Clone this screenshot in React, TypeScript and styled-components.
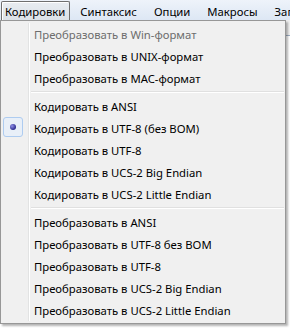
import React from 'react';
import { styled, createGlobalStyle } from 'styled-components';

const Global = createGlobalStyle`
  html, body {
    margin: 0;
    padding: 0;
    background: #ffffff;
  }
  body {
    font-family: 'Noto Sans', 'Open Sans', 'DejaVu Sans', sans-serif;
    font-size: 11.3px;
  }
`;

const Window = styled.div`
  width: 290px;
  height: 328px;
  display: flex;
  flex-direction: column;
  overflow: hidden;
  position: relative;
`;

const MenuBar = styled.div`
  height: 20px;
  display: flex;
  align-items: stretch;
  gap: 1px;
  background: linear-gradient(#eef3fa, #dde7f4);
  white-space: nowrap;
  overflow: hidden;
`;

const BarItem = styled.div<{ $open?: boolean }>`
  flex: none;
  display: flex;
  align-items: center;
  padding: ${({ $open }) => ($open ? '0 4px 0 3px' : '0 7px')};
  margin: 1px ${({ $open }) => ($open ? '1px' : '0')} 0
    ${({ $open }) => ($open ? '1px' : '0')};
  color: #000;
  border: 1px solid ${({ $open }) => ($open ? '#6e6e6e' : 'transparent')};
  border-bottom: none;
  border-radius: 2px 2px 0 0;
  background: ${({ $open }) =>
    $open ? 'linear-gradient(#e8ecf1, #dbe1e8)' : 'transparent'};
  box-shadow: ${({ $open }) => ($open ? 'inset 1px 1px 0 #fff' : 'none')};
`;

const Body = styled.div`
  flex: 1;
  position: relative;
  background: #ffffff;
`;

const Toolbar = styled.div`
  height: 15px;
  background: #f0f0f0;
  border-bottom: 1px solid #a0afc3;
`;

const Dropdown = styled.div`
  position: absolute;
  top: 0;
  left: 0;
  width: 284px;
  padding: 2px 0;
  background: #f0f0f0;
  border: 1px solid #979797;
  box-shadow: 2px 2px 2px rgba(0, 0, 0, 0.3);
  display: flex;
  flex-direction: column;
`;

const Gutter = styled.div`
  position: absolute;
  top: 2px;
  bottom: 2px;
  left: 27px;
  width: 2px;
  border-left: 1px solid #e2e3e3;
  border-right: 1px solid #ffffff;
  box-sizing: border-box;
`;

const Item = styled.div<{ $disabled?: boolean }>`
  position: relative;
  height: 22px;
  display: flex;
  align-items: center;
  padding-left: 33px;
  color: ${({ $disabled }) => ($disabled ? '#6d6d6d' : '#000')};
  white-space: nowrap;
`;

const Check = styled.span`
  position: absolute;
  left: 2px;
  top: 0;
  width: 20px;
  height: 20px;
  box-sizing: border-box;
  border: 1px solid #aeccf0;
  border-radius: 3px;
  background: #e8eff8;
  display: flex;
  align-items: center;
  justify-content: center;
`;

const Dot = styled.span`
  width: 6px;
  height: 6px;
  border-radius: 50%;
  background: radial-gradient(circle at 35% 35%, #8f8fe8, #2b2b8e 70%);
`;

const Separator = styled.div`
  height: 6px;
  display: flex;
  align-items: center;
  padding-left: 30px;
  &::after {
    content: '';
    flex: 1;
    height: 1px;
    margin-right: 1px;
    background: #e0e0e0;
    border-bottom: 1px solid #ffffff;
  }
`;

type Entry =
  | { label: string; disabled?: boolean; checked?: boolean }
  | 'sep';

const entries: Entry[] = [
  { label: 'Преобразовать в Win-формат', disabled: true },
  { label: 'Преобразовать в UNIX-формат' },
  { label: 'Преобразовать в MAC-формат' },
  'sep',
  { label: 'Кодировать в ANSI' },
  { label: 'Кодировать в UTF-8 (без BOM)', checked: true },
  { label: 'Кодировать в UTF-8' },
  { label: 'Кодировать в UCS-2 Big Endian' },
  { label: 'Кодировать в UCS-2 Little Endian' },
  'sep',
  { label: 'Преобразовать в ANSI' },
  { label: 'Преобразовать в UTF-8 без BOM' },
  { label: 'Преобразовать в UTF-8' },
  { label: 'Преобразовать в UCS-2 Big Endian' },
  { label: 'Преобразовать в UCS-2 Little Endian' },
];

const App = () => (
  <Window>
    <Global />
    <MenuBar>
      <BarItem $open>Кодировки</BarItem>
      <BarItem>Синтаксис</BarItem>
      <BarItem>Опции</BarItem>
      <BarItem>Макросы</BarItem>
      <BarItem>Запуск</BarItem>
    </MenuBar>
    <Body>
      <Toolbar />
      <Dropdown>
        <Gutter />
        {entries.map((e, i) =>
          e === 'sep' ? (
            <Separator key={i} />
          ) : (
            <Item key={i} $disabled={e.disabled}>
              {e.checked && (
                <Check>
                  <Dot />
                </Check>
              )}
              {e.label}
            </Item>
          ),
        )}
      </Dropdown>
    </Body>
  </Window>
);

export default App;
